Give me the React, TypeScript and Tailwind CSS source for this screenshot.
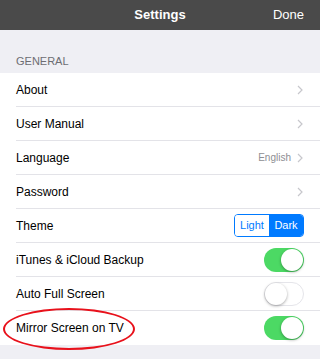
import React from "react";

type Row = {
  label: string;
  kind: "link" | "value" | "theme" | "toggle";
  value?: string;
  on?: boolean;
};

const rows: Row[] = [
  { label: "About", kind: "link" },
  { label: "User Manual", kind: "link" },
  { label: "Language", kind: "value", value: "English" },
  { label: "Password", kind: "link" },
  { label: "Theme", kind: "theme" },
  { label: "iTunes & iCloud Backup", kind: "toggle", on: true },
  { label: "Auto Full Screen", kind: "toggle", on: false },
  { label: "Mirror Screen on TV", kind: "toggle", on: true },
];

function Chevron() {
  return (
    <svg width="6" height="10" viewBox="0 0 6 10" className="ml-[6px] mr-[1px]">
      <path d="M1 1 L5 5 L1 9" fill="none" stroke="#c7c7cc" strokeWidth="1.2" />
    </svg>
  );
}

function Toggle({ on }: { on?: boolean }) {
  return (
    <div
      className={
        on
          ? "w-[40px] h-[24px] rounded-full bg-[#4cd964] flex items-center justify-end px-[1px]"
          : "w-[40px] h-[24px] rounded-full bg-white border border-[#e5e5ea] flex items-center justify-start"
      }
    >
      <div className="w-[22px] h-[22px] rounded-full bg-white shadow-[0_1px_3px_rgba(0,0,0,0.35)]" />
    </div>
  );
}

function ThemeSwitch() {
  return (
    <div className="flex h-[23px] w-[70px] border border-[#007aff] rounded-[4px] overflow-hidden text-[11px]">
      <div className="flex-1 flex items-center justify-center text-[#007aff] bg-white">Light</div>
      <div className="flex-1 flex items-center justify-center text-white bg-[#007aff]">Dark</div>
    </div>
  );
}

export default function App() {
  return (
    <div
      className="w-[320px] h-[359px] bg-[#efeff4] overflow-hidden relative"
      style={{ fontFamily: '"Liberation Sans", Arial, sans-serif' }}
    >
      {/* header */}
      <div className="h-[30px] bg-[#4a4a4a] grid grid-cols-[1fr_auto_1fr] items-center text-white text-[13px]">
        <div />
        <div className="font-bold">Settings</div>
        <div className="text-right pr-[16px]">Done</div>
      </div>

      <div className="h-[43px] flex items-end pl-[16px] pb-[5px] text-[11px] leading-[13px] text-[#6d6d72]">
        GENERAL
      </div>

      <div className="bg-white">
        {rows.map((row, i) => (
          <div key={row.label} className="pl-[16px] h-[34px]">
            <div
              className={
                "h-full flex items-center justify-between pr-[16px] " +
                (i < rows.length - 1 ? "border-b border-[#e3e3e8]" : "")
              }
            >
              <span className="text-[12px] text-black">{row.label}</span>
              {row.kind === "link" && <Chevron />}
              {row.kind === "value" && (
                <div className="flex items-center">
                  <span className="text-[10px] text-[#8e8e93]">{row.value}</span>
                  <Chevron />
                </div>
              )}
              {row.kind === "theme" && <ThemeSwitch />}
              {row.kind === "toggle" && <Toggle on={row.on} />}
            </div>
          </div>
        ))}
      </div>

      {/* red annotation */}
      <div className="absolute left-[3px] top-[308px] w-[132px] h-[42px] rounded-[50%] border-2 border-[#e8111b]" />
    </div>
  );
}
